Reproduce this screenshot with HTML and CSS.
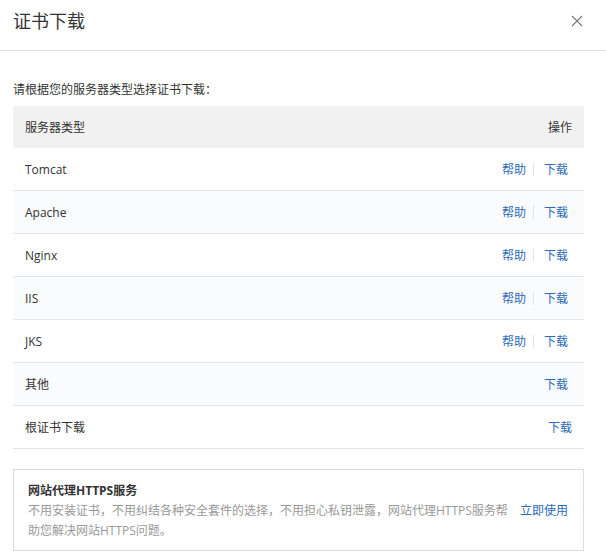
FILE: index.html
```html
<!DOCTYPE html>
<html lang="zh-CN">
<head>
<meta charset="utf-8">
<title>证书下载</title>
<link rel="stylesheet" href="styles.css">
</head>
<body>
<div class="dialog">
  <div class="dlg-head">
    <h1 class="dlg-title">证书下载</h1>
    <button class="dlg-close" aria-label="关闭">
      <svg width="12" height="12" viewBox="0 0 12 12"><path d="M1 1L11 11M11 1L1 11" stroke="#777" stroke-width="1.1" fill="none"/></svg>
    </button>
  </div>
  <div class="dlg-body">
    <p class="intro">请根据您的服务器类型选择证书下载：</p>
    <table class="cert-table">
      <thead>
        <tr><th class="c-type">服务器类型</th><th class="c-op">操作</th></tr>
      </thead>
      <tbody>
        <tr><td class="c-type">Tomcat</td><td class="c-op"><span class="ops"><a class="lnk">帮助</a><span class="sep"></span><a class="lnk">下载</a></span></td></tr>
        <tr><td class="c-type">Apache</td><td class="c-op"><span class="ops"><a class="lnk">帮助</a><span class="sep"></span><a class="lnk">下载</a></span></td></tr>
        <tr><td class="c-type">Nginx</td><td class="c-op"><span class="ops"><a class="lnk">帮助</a><span class="sep"></span><a class="lnk">下载</a></span></td></tr>
        <tr><td class="c-type">IIS</td><td class="c-op"><span class="ops"><a class="lnk">帮助</a><span class="sep"></span><a class="lnk">下载</a></span></td></tr>
        <tr><td class="c-type">JKS</td><td class="c-op"><span class="ops"><a class="lnk">帮助</a><span class="sep"></span><a class="lnk">下载</a></span></td></tr>
        <tr><td class="c-type">其他</td><td class="c-op"><span class="ops"><a class="lnk">下载</a></span></td></tr>
        <tr><td class="c-type">根证书下载</td><td class="c-op"><a class="lnk">下载</a></td></tr>
      </tbody>
    </table>
    <div class="promo">
      <div class="promo-text">
        <div class="promo-title">网站代理HTTPS服务</div>
        <div class="promo-desc">不用安装证书，不用纠结各种安全套件的选择，不用担心私钥泄露，网站代理HTTPS服务帮助您解决网站HTTPS问题。</div>
      </div>
      <a class="lnk promo-link">立即使用</a>
    </div>
  </div>
</div>
</body>
</html>
```
FILE: styles.css
```css
html, body {
  margin: 0;
  padding: 0;
  background: #fff;
}
body {
  font-family: "Open Sans", "Noto Sans CJK SC", sans-serif;
  font-size: 12px;
  color: #333;
}
.dialog {
  width: 606px;
}
.dlg-head {
  height: 51px;
  box-sizing: border-box;
  border-bottom: 1px solid #e3e3e3;
  display: flex;
  justify-content: space-between;
  align-items: flex-start;
  padding: 9px 23px 0 13px;
}
.dlg-title {
  margin: 0;
  font-size: 18px;
  line-height: 24px;
  font-weight: normal;
  color: #333;
}
.dlg-close {
  border: 0;
  background: none;
  padding: 0;
  margin-top: 6px;
  width: 12px;
  height: 12px;
  display: block;
}
.dlg-close svg { display: block; }
.dlg-body {
  padding: 29px 22px 0 13px;
}
.intro {
  margin: 0 0 6px;
  line-height: 20px;
}
.cert-table {
  width: 100%;
  border-collapse: collapse;
}
.cert-table th {
  height: 42px;
  background: #f1f1f1;
  font-weight: normal;
  padding: 0 12px;
}
.cert-table td {
  height: 42px;
  padding: 0 12px;
  border-bottom: 1px solid #e6e6e6;
}
.cert-table tbody tr:nth-child(even) td {
  background: #fafbfc;
}
.c-type { text-align: left; }
.c-op { text-align: right; }
.ops {
  display: inline-flex;
  align-items: center;
  margin-right: 4px;
}
.lnk {
  color: #2c6bb8;
  text-decoration: none;
  cursor: pointer;
}
.sep {
  display: inline-block;
  width: 1px;
  height: 13px;
  background: #e2e2e2;
  margin: 0 10px 0 7px;
}
.promo {
  margin-top: 20px;
  border: 1px solid #dcdcdc;
  padding: 11px 15px 9px 14px;
  display: flex;
  align-items: flex-start;
  gap: 10px;
}
.promo-text {
  flex: 1;
  min-width: 0;
}
.promo-title {
  font-weight: bold;
  line-height: 20px;
  color: #333;
}
.promo-desc {
  line-height: 20px;
  color: #999;
}
.promo-link {
  margin-top: 20px;
  line-height: 20px;
  white-space: nowrap;
}
```
